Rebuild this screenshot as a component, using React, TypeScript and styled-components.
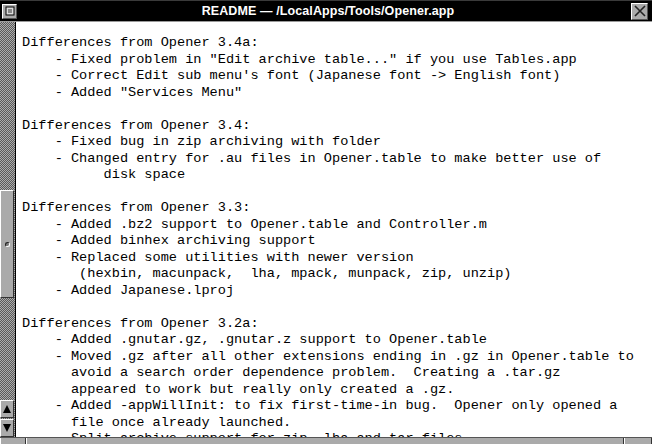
import React from 'react';
import styled, { createGlobalStyle } from 'styled-components';

const GlobalStyle = createGlobalStyle`
  html, body {
    margin: 0;
    padding: 0;
    background: #fff;
    overflow: hidden;
  }
`;

const Window = styled.div`
  width: 652px;
  height: 444px;
  display: flex;
  flex-direction: column;
  background: #000;
  overflow: hidden;
`;

const TitleBar = styled.div`
  height: 20px;
  border-top: 1px solid #3a3a3a;
  border-bottom: 1px solid #9a9a9a;
  background: #000;
  display: flex;
  align-items: center;
  padding: 0 4px 0 2px;
`;

const Title = styled.div`
  flex: 1;
  text-align: center;
  color: #fff;
  font-family: "Liberation Sans", Arial, sans-serif;
  font-weight: bold;
  font-size: 12.5px;
  letter-spacing: 0.1px;
  padding-left: 8px;
`;

const TitleButton = styled.div<{ $size: number }>`
  width: ${p => p.$size - 2}px;
  height: ${p => p.$size - 2}px;
  background: #aaa;
  border-top: 1px solid #fff;
  border-left: 1px solid #fff;
  border-right: 1px solid #555;
  border-bottom: 1px solid #555;
  display: flex;
  align-items: center;
  justify-content: center;
`;

const Body = styled.div`
  flex: 1;
  display: flex;
  min-height: 0;
`;

const Scroller = styled.div`
  width: 15px;
  border-right: 1px solid #000;
  display: flex;
  flex-direction: column;
  background: repeating-conic-gradient(#5a5a5a 0 25%, #acacac 0 50%) 0 0 / 2px 2px;
`;

const Track = styled.div`
  flex: 1;
  display: flex;
  flex-direction: column;
`;

const Knob = styled.div<{ $top: number; $height: number }>`
  margin-top: ${p => p.$top}px;
  height: ${p => p.$height - 2}px;
  width: 12px;
  background: #aaa;
  border-top: 1px solid #fff;
  border-left: 1px solid #fff;
  border-right: 1px solid #333;
  border-bottom: 1px solid #333;
  display: flex;
  align-items: center;
  justify-content: center;
`;

const Dimple = styled.div`
  width: 5px;
  height: 5px;
  border-radius: 50%;
  background: #777;
  border-top: 1px solid #222;
  border-left: 1px solid #222;
  border-right: 1px solid #fff;
  border-bottom: 1px solid #fff;
  box-sizing: border-box;
`;

const ArrowButton = styled.div`
  width: 12px;
  height: 16px;
  margin-top: 1px;
  background: #aaa;
  border-top: 1px solid #fff;
  border-left: 1px solid #fff;
  border-right: 1px solid #333;
  border-bottom: 1px solid #333;
  display: flex;
  align-items: center;
  justify-content: center;
`;

const TextArea = styled.pre`
  flex: 1;
  margin: 0;
  padding: 13px 0 0 6px;
  background: #fff;
  color: #000;
  font-family: "Liberation Mono", "Courier New", monospace;
  font-size: 13.6px;
  line-height: 16.5px;
  overflow: hidden;
  white-space: pre;
`;

const ResizeBar = styled.div`
  height: 6px;
  border-top: 1px solid #555;
  background: #aaa;
  display: grid;
  grid-template-columns: 26px 1fr 28px;
`;

const ResizeSegment = styled.div`
  border-left: 1px solid #fff;
  border-right: 1px solid #333;
`;

const readme = `Differences from Opener 3.4a:
    - Fixed problem in "Edit archive table..." if you use Tables.app
    - Correct Edit sub menu's font (Japanese font -> English font)
    - Added "Services Menu"

Differences from Opener 3.4:
    - Fixed bug in zip archiving with folder
    - Changed entry for .au files in Opener.table to make better use of
          disk space

Differences from Opener 3.3:
    - Added .bz2 support to Opener.table and Controller.m
    - Added binhex archiving support
    - Replaced some utilities with newer version
       (hexbin, macunpack,  lha, mpack, munpack, zip, unzip)
    - Added Japanese.lproj

Differences from Opener 3.2a:
    - Added .gnutar.gz, .gnutar.z support to Opener.table
    - Moved .gz after all other extensions ending in .gz in Opener.table to
      avoid a search order dependence problem.  Creating a .tar.gz
      appeared to work but really only created a .gz.
    - Added -appWillInit: to fix first-time-in bug.  Opener only opened a
      file once already launched.
    - Split archive support for zip, lha and tar files`;

const MiniIcon = () => (
  <svg width="10" height="10" viewBox="0 0 10 10">
    <rect x="0.5" y="0.5" width="9" height="9" fill="#000" />
    <rect x="1.5" y="1.5" width="7" height="7" fill="#ddd" />
    <rect x="3" y="3" width="4" height="4" fill="#888" />
  </svg>
);

const CloseIcon = () => (
  <svg width="12" height="12" viewBox="0 0 12 12">
    <path d="M1 1 L11 11 M11 1 L1 11" stroke="#222" strokeWidth="1.6" />
  </svg>
);

const Arrow = ({ up }: { up: boolean }) => (
  <svg width="8" height="8" viewBox="0 0 8 8">
    <polygon points={up ? '4,0 8,8 0,8' : '0,0 8,0 4,8'} fill="#000" />
  </svg>
);

export default function App() {
  return (
    <Window>
      <GlobalStyle />
      <TitleBar>
        <TitleButton $size={15}>
          <MiniIcon />
        </TitleButton>
        <Title>README — /LocalApps/Tools/Opener.app</Title>
        <TitleButton $size={17}>
          <CloseIcon />
        </TitleButton>
      </TitleBar>
      <Body>
        <Scroller>
          <Track>
            <Knob $top={168} $height={108}>
              <Dimple />
            </Knob>
          </Track>
          <ArrowButton>
            <Arrow up />
          </ArrowButton>
          <ArrowButton>
            <Arrow up={false} />
          </ArrowButton>
        </Scroller>
        <TextArea>{readme}</TextArea>
      </Body>
      <ResizeBar>
        <ResizeSegment />
        <ResizeSegment />
        <ResizeSegment />
      </ResizeBar>
    </Window>
  );
}
